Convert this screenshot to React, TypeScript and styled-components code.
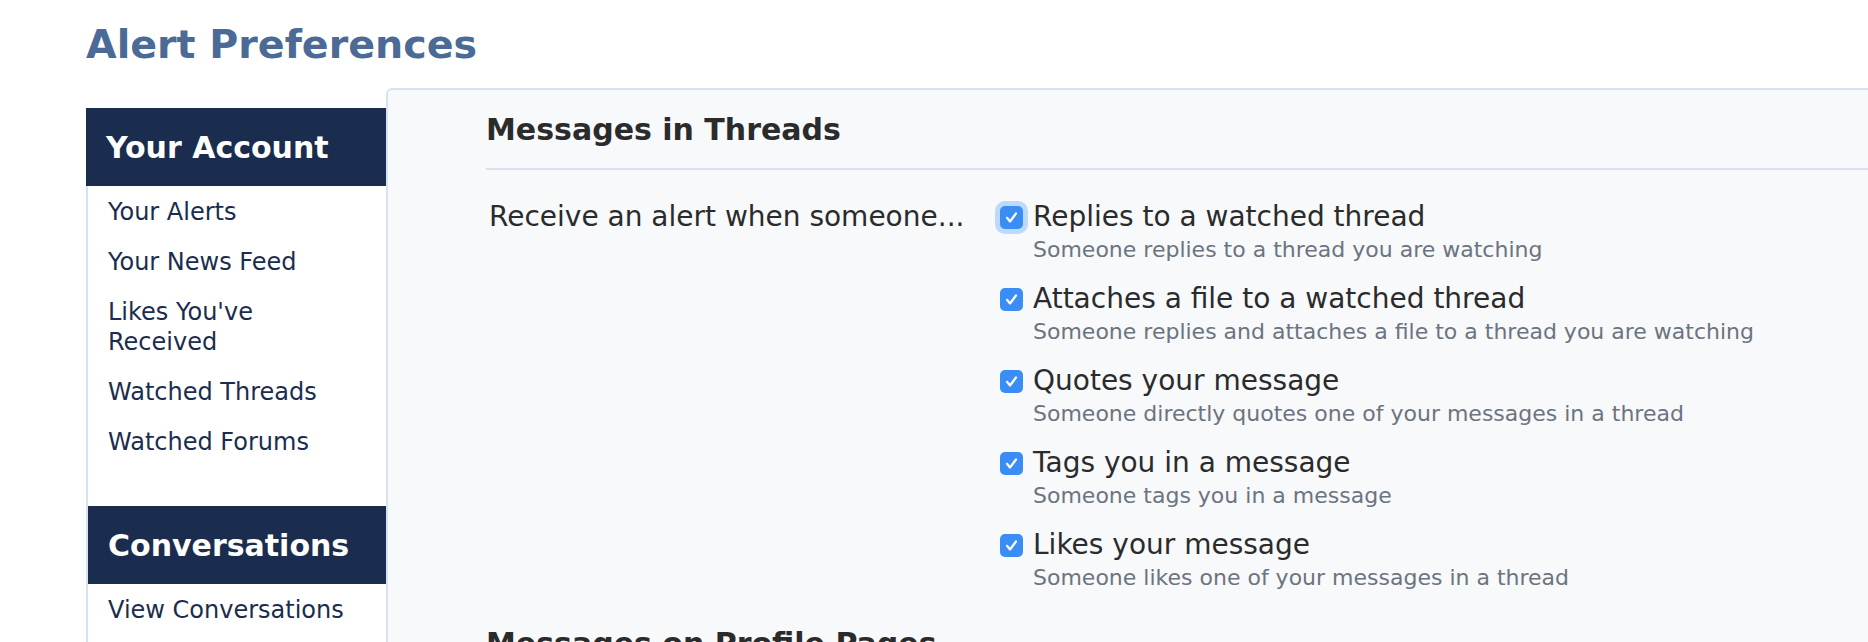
import React from 'react'
import styled, { createGlobalStyle } from 'styled-components'

const GlobalStyle = createGlobalStyle`
  html, body {
    margin: 0;
    padding: 0;
    background: #fff;
    overflow: hidden;
  }
  body {
    font-family: "DejaVu Sans", Verdana, sans-serif;
  }
`

const Page = styled.div`
  padding: 20px 0 0 86px;
  overflow: hidden;
`

const Title = styled.h1`
  margin: 0 0 20px;
  font-size: 39.6px;
  line-height: 48px;
  font-weight: bold;
  color: #4b6a96;
`

const Layout = styled.div`
  display: flex;
  align-items: flex-start;
`

const Sidebar = styled.nav`
  flex: none;
  width: 298px;
  margin-top: 20px;
  background: #fff;
  border-left: 2px solid #d8e3f0;
`

type HeaderProps = {
  first?: boolean
}
const SideHeader = styled.h3<HeaderProps>`
  margin: 0 0 0 ${({first = false}) => (first ? '-2px' : '0')};
  padding: 0 20px;
  height: 78px;
  line-height: 79px;
  font-size: 30px;
  font-weight: bold;
  color: #fff;
  background: #1b2d4e;
`

const SideList = styled.ul`
  list-style: none;
  margin: 0;
  padding: 1px 0 39px;
`

const SideLink = styled.li`
  padding: 10px 20px;
  font-size: 24px;
  line-height: 30px;
  color: #1b2d4e;
  cursor: pointer;
`

const Panel = styled.main`
  flex: 1;
  margin-right: -40px;
  min-height: 700px;
  background: #f7f9fb;
  border: 2px solid #d8e3f0;
  border-radius: 6px 0 0 0;
`

const SectionHeading = styled.h2`
  margin: 0 0 0 98px;
  padding: 20px 0 18px;
  font-size: 30px;
  line-height: 40px;
  font-weight: bold;
  color: #2b2b2b;
  border-bottom: 2px solid #d8e3f0;
`

const FormRow = styled.div`
  display: grid;
  grid-template-columns: 514px 1fr;
  padding: 30px 0 12px 98px;
`

const RowLabel = styled.div`
  padding-left: 3px;
  font-size: 28px;
  line-height: 34px;
  color: #2b2b2b;
`

const Options = styled.div`
  display: flex;
  flex-direction: column;
  gap: 18px;
`

const Option = styled.label`
  display: grid;
  grid-template-columns: 23px 1fr;
  column-gap: 10px;
  cursor: pointer;
`

type CheckProps = {
  focused?: boolean
}
const Check = styled.span<CheckProps>`
  display: flex;
  align-items: center;
  justify-content: center;
  width: 23px;
  height: 23px;
  margin-top: 6px;
  border-radius: 5px;
  background: #3b8df6;
  box-shadow: ${({focused = false}) => (focused ? '0 0 0 5px #bcdafc' : 'none')};
`

const OptionText = styled.div`
  font-size: 28px;
  line-height: 34px;
  color: #2b2b2b;
`

const Hint = styled.div`
  margin-top: 2px;
  font-size: 22px;
  line-height: 28px;
  color: #6b7480;
`

const CheckMark = () => (
  <svg width="15" height="15" viewBox="0 0 15 15">
    <path d="M3 7.8 L6 11.5 L12 3.5" fill="none" stroke="#fff" strokeWidth="2.2" strokeLinecap="round" strokeLinejoin="round" />
  </svg>
)

type Pref = {
  label: string
  hint: string
}

const threadPrefs: Pref[] = [
  {label: 'Replies to a watched thread', hint: 'Someone replies to a thread you are watching'},
  {label: 'Attaches a file to a watched thread', hint: 'Someone replies and attaches a file to a thread you are watching'},
  {label: 'Quotes your message', hint: 'Someone directly quotes one of your messages in a thread'},
  {label: 'Tags you in a message', hint: 'Someone tags you in a message'},
  {label: 'Likes your message', hint: 'Someone likes one of your messages in a thread'},
]

const profilePrefs: Pref[] = [
  {label: 'Posts on your profile', hint: 'Someone posts a message on your profile'},
  {label: 'Comments on your profile post', hint: 'Someone comments on a message posted on your profile'},
]

const accountLinks = ['Your Alerts', 'Your News Feed', "Likes You've Received", 'Watched Threads', 'Watched Forums']

const PrefGroup = ({title, prefs, focusFirst = false}: {title: string; prefs: Pref[]; focusFirst?: boolean}) => (
  <section>
    <SectionHeading>{title}</SectionHeading>
    <FormRow>
      <RowLabel>Receive an alert when someone...</RowLabel>
      <Options>
        {prefs.map((p, i) => (
          <Option key={p.label}>
            <Check focused={focusFirst && i === 0}>
              <CheckMark />
            </Check>
            <div>
              <OptionText>{p.label}</OptionText>
              <Hint>{p.hint}</Hint>
            </div>
          </Option>
        ))}
      </Options>
    </FormRow>
  </section>
)

export default function App() {
  return (
    <>
      <GlobalStyle />
      <Page>
        <Title>Alert Preferences</Title>
        <Layout>
          <Sidebar>
            <SideHeader first>Your Account</SideHeader>
            <SideList>
              {accountLinks.map((l) => (
                <SideLink key={l}>{l}</SideLink>
              ))}
            </SideList>
            <SideHeader>Conversations</SideHeader>
            <SideList>
              <SideLink>View Conversations</SideLink>
            </SideList>
          </Sidebar>
          <Panel>
            <PrefGroup title="Messages in Threads" prefs={threadPrefs} focusFirst />
            <PrefGroup title="Messages on Profile Pages" prefs={profilePrefs} />
          </Panel>
        </Layout>
      </Page>
    </>
  )
}
